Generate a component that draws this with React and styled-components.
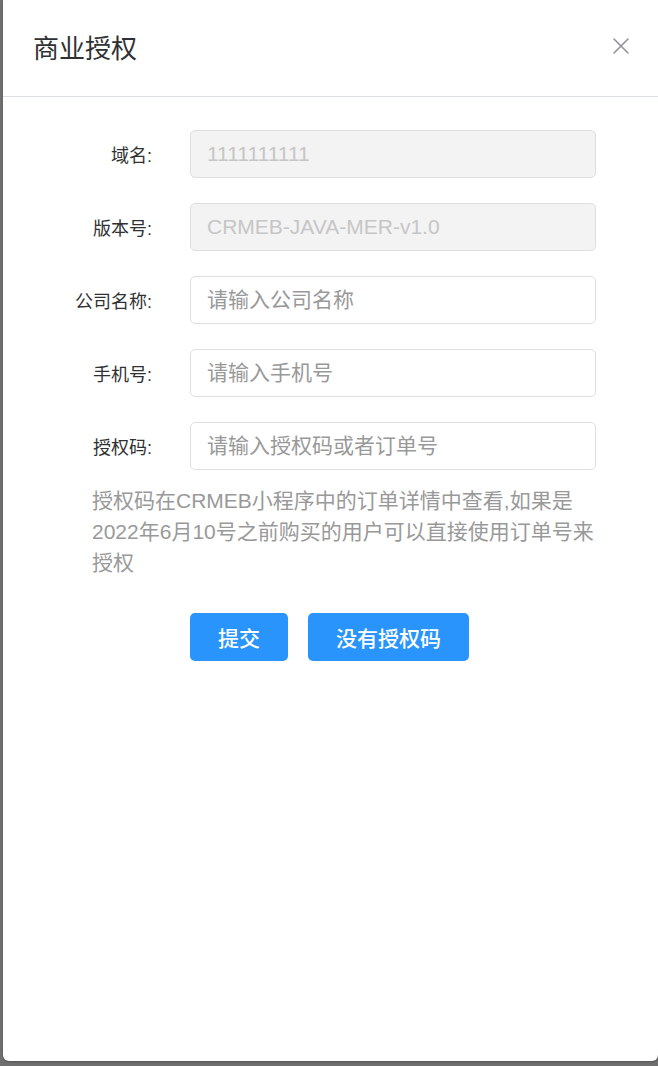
import React from "react";
import styled, { createGlobalStyle } from "styled-components";

const GlobalStyle = createGlobalStyle`
  html, body {
    margin: 0;
    padding: 0;
    background: #6f6f6f;
    font-family: "Liberation Sans", "Noto Sans CJK SC", sans-serif;
  }
`;

const Page = styled.div`
  height: 1066px;
  padding: 0 0 5px 3px;
  box-sizing: border-box;
  display: flex;
`;

const Dialog = styled.div`
  flex: 1;
  background: #fff;
  border-radius: 0 0 6px 6px;
  display: flex;
  flex-direction: column;
  box-shadow: 0 1px 2px rgba(0, 0, 0, 0.25);
`;

const Header = styled.div`
  height: 97px;
  box-sizing: border-box;
  border-bottom: 1px solid #dcdfe6;
  display: flex;
  align-items: center;
  justify-content: space-between;
  padding: 0 28px 4px 30px;
`;

const Title = styled.div`
  font-size: 26px;
  color: #303133;
`;

const Close = styled.button`
  border: 0;
  background: none;
  padding: 0;
  width: 18px;
  height: 18px;
  cursor: pointer;
  display: flex;
`;

const Body = styled.div`
  padding: 33px 62px 0 0;
`;

const Row = styled.div`
  display: flex;
  align-items: center;
  margin-bottom: 25px;
`;

const Label = styled.label`
  width: 149px;
  padding-right: 38px;
  text-align: right;
  font-size: 18px;
  color: #303133;
`;

const Input = styled.input`
  flex: 1;
  height: 48px;
  box-sizing: border-box;
  border: 1px solid #dcdfe6;
  border-radius: 5px;
  padding: 0 16px;
  font-family: inherit;
  font-size: 21px;
  color: #606266;
  background: ${(p) => (p.disabled ? "#f3f3f3" : "#fff")};
  outline: none;
  &::placeholder {
    color: #999;
  }
  &:disabled {
    color: #c6c6c6;
  }
`;

const Hint = styled.p`
  margin: -10px -8px 0 89px;
  font-size: 21px;
  line-height: 31px;
  color: #999;
`;

const Actions = styled.div`
  display: flex;
  gap: 20px;
  padding-left: 187px;
  margin-top: 35px;
`;

const Button = styled.button`
  height: 48px;
  padding: 0 28px;
  border: 0;
  border-radius: 5px;
  background: #2a94fd;
  color: #fff;
  font-family: inherit;
  font-size: 21px;
  font-weight: 500;
  cursor: pointer;
`;

const fields = [
  { label: "域名", value: "1111111111", disabled: true },
  { label: "版本号", value: "CRMEB-JAVA-MER-v1.0", disabled: true },
  { label: "公司名称", placeholder: "请输入公司名称" },
  { label: "手机号", placeholder: "请输入手机号" },
  { label: "授权码", placeholder: "请输入授权码或者订单号" },
];

const App = () => {
  return (
    <Page>
      <GlobalStyle />
      <Dialog>
        <Header>
          <Title>商业授权</Title>
          <Close aria-label="close">
            <svg width="18" height="18" viewBox="0 0 18 18">
              <path
                d="M2 2 L16 16 M16 2 L2 16"
                stroke="#909399"
                strokeWidth="1.6"
                strokeLinecap="round"
              />
            </svg>
          </Close>
        </Header>
        <Body>
          {fields.map((f) => (
            <Row key={f.label}>
              <Label>{f.label}:</Label>
              <Input
                defaultValue={f.value}
                placeholder={f.placeholder}
                disabled={f.disabled}
              />
            </Row>
          ))}
          <Hint>
            授权码在CRMEB小程序中的订单详情中查看,如果是2022年6月10号之前购买的用户可以直接使用订单号来授权
          </Hint>
          <Actions>
            <Button>提交</Button>
            <Button>没有授权码</Button>
          </Actions>
        </Body>
      </Dialog>
    </Page>
  );
};

export default App;
